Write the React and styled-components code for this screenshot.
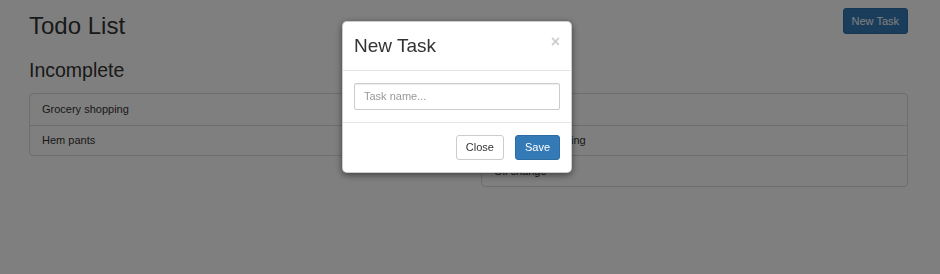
import React from 'react'
import styled, { createGlobalStyle } from 'styled-components'

const Global = createGlobalStyle`
  html, body {
    margin: 0;
    padding: 0;
    background: #fff;
    font-family: "Liberation Sans", Arial, sans-serif;
    color: #333;
  }
  * { box-sizing: border-box; }
`

const Page = styled.div`
  padding: 0 32px 0 29px;
  height: 274px;
`

const Header = styled.div`
  display: flex;
  justify-content: space-between;
  align-items: flex-start;
`

const Title = styled.h1`
  margin: 13px 0 0;
  font-size: 24px;
  font-weight: 500;
  line-height: 1.1;
`

const Button = styled.button`
  height: 25px;
  padding: 0 ${p => p.$pad || 9}px;
  font-family: inherit;
  font-size: 11px;
  border-radius: 3px;
  border: 1px solid ${p => (p.$primary ? '#2e6da4' : '#ccc')};
  background: ${p => (p.$primary ? '#337ab7' : '#fff')};
  color: ${p => (p.$primary ? '#fff' : '#333')};
  cursor: pointer;
`

const TopButton = styled(Button)`
  margin-top: 8px;
  height: 26px;
`

const Columns = styled.div`
  display: grid;
  grid-template-columns: 1fr 1fr;
  column-gap: 25px;
`

const SubTitle = styled.h2`
  margin: 21px 0 11px;
  font-size: 19.5px;
  font-weight: 500;
  line-height: 1.1;
`

const List = styled.div`
  border: 1px solid #ddd;
  border-radius: 4px;
`

const Item = styled.div`
  height: 30.7px;
  display: flex;
  align-items: center;
  padding: 0 12px;
  font-size: 11px;
  & + & {
    border-top: 1px solid #ddd;
  }
`

const Backdrop = styled.div`
  position: fixed;
  inset: 0;
  background: rgba(0, 0, 0, 0.5);
  padding: 21px 0 0 342px;
`

const Modal = styled.div`
  width: 230px;
  background: #fff;
  border: 1px solid rgba(0, 0, 0, 0.2);
  border-radius: 5px;
  box-shadow: 0 2px 7px rgba(0, 0, 0, 0.5);
`

const ModalHeader = styled.div`
  display: flex;
  justify-content: space-between;
  align-items: flex-start;
  padding: 14px 11px 13px;
  border-bottom: 1px solid #e5e5e5;
`

const ModalTitle = styled.h4`
  margin: 0;
  font-size: 19px;
  font-weight: 500;
  line-height: 1.1;
`

const CloseX = styled.span`
  margin-top: -2px;
  font-size: 16px;
  font-weight: bold;
  line-height: 1;
  color: #000;
  opacity: 0.2;
`

const ModalBody = styled.div`
  padding: 12px 11px;
`

const Input = styled.input`
  display: block;
  width: 100%;
  height: 27px;
  padding: 0 9px;
  border: 1px solid #ccc;
  border-radius: 2px;
  font-family: inherit;
  font-size: 11px;
  color: #555;
  box-shadow: inset 0 1px 1px rgba(0, 0, 0, 0.075);
  &::placeholder { color: #999; }
`

const ModalFooter = styled.div`
  display: flex;
  justify-content: flex-end;
  gap: 11px;
  padding: 12px 11px;
  border-top: 1px solid #e5e5e5;
`

const incomplete = ['Grocery shopping', 'Hem pants']
const complete = ['Laundry', 'Bathroom cleaning', 'Oil change']

export default function App() {
  return (
    <>
      <Global />
      <Page>
        <Header>
          <Title>Todo List</Title>
          <TopButton $primary $pad={8}>New Task</TopButton>
        </Header>
        <Columns>
          <div>
            <SubTitle>Incomplete</SubTitle>
            <List>
              {incomplete.map(t => <Item key={t}>{t}</Item>)}
            </List>
          </div>
          <div>
            <SubTitle>Complete</SubTitle>
            <List>
              {complete.map(t => <Item key={t}>{t}</Item>)}
            </List>
          </div>
        </Columns>
      </Page>
      <Backdrop>
        <Modal>
          <ModalHeader>
            <ModalTitle>New Task</ModalTitle>
            <CloseX>×</CloseX>
          </ModalHeader>
          <ModalBody>
            <Input placeholder="Task name..." />
          </ModalBody>
          <ModalFooter>
            <Button>Close</Button>
            <Button $primary>Save</Button>
          </ModalFooter>
        </Modal>
      </Backdrop>
    </>
  )
}
